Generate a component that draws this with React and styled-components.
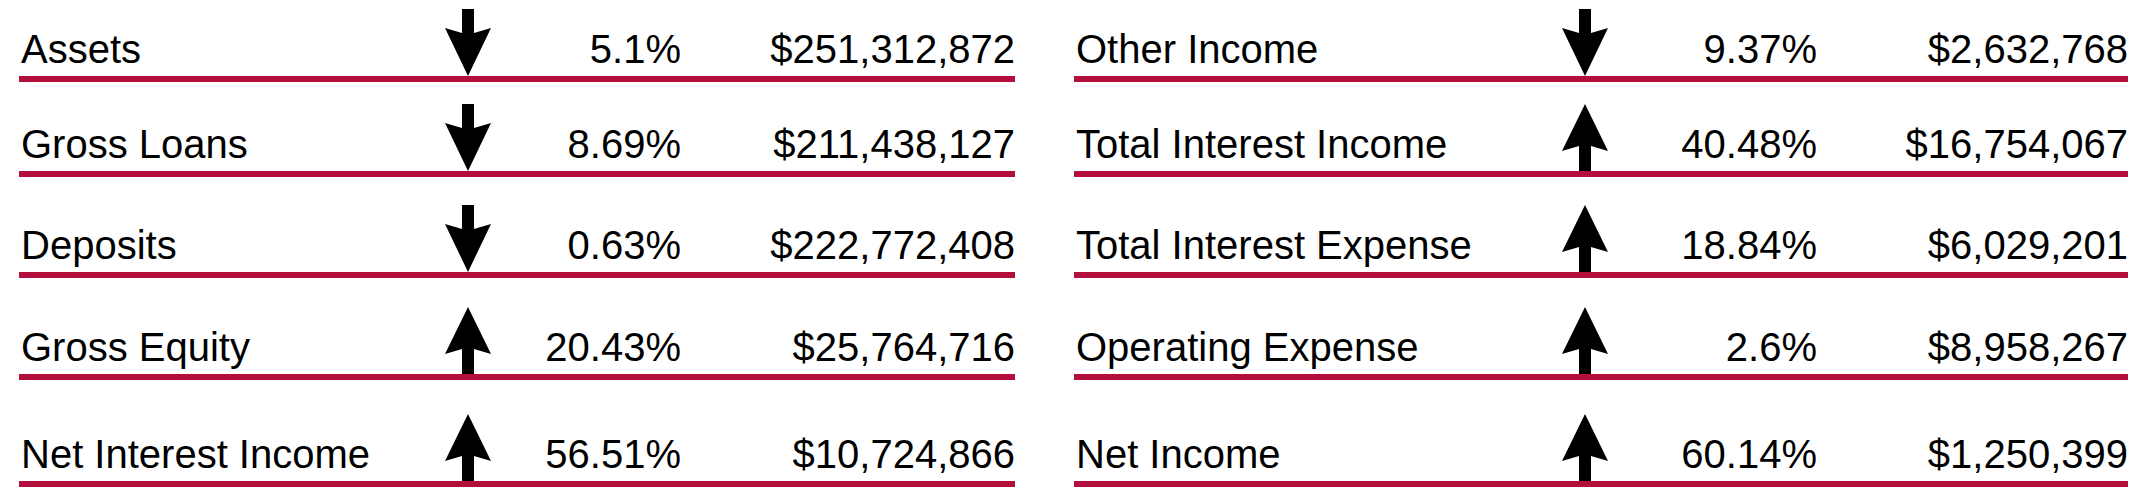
import React from "react";
import styled, { createGlobalStyle } from "styled-components";

const GlobalStyle = createGlobalStyle`
  body {
    margin: 0;
    background: #ffffff;
    font-family: "Liberation Sans", Arial, Helvetica, sans-serif;
  }
`;

const Page = styled.div`
  display: flex;
  gap: 59px;
  padding: 0 12px 0 19px;
  width: 2140px;
  height: 501px;
  box-sizing: border-box;
  overflow: hidden;
`;

const Column = styled.div`
  display: flex;
  flex-direction: column;
  width: ${({ $width }) => $width}px;
`;

const Row = styled.div`
  display: grid;
  grid-template-columns: ${({ $cols }) => $cols};
  align-items: end;
  height: ${({ $h }) => $h}px;
  border-bottom: 6px solid #b20f3c;
`;

const Label = styled.span`
  font-size: 40px;
  line-height: 1;
  color: #000;
  padding: 0 0 7px 2px;
  white-space: nowrap;
`;

const Value = styled(Label)`
  text-align: right;
  padding-left: 0;
`;

const ArrowCell = styled.div`
  display: flex;
  justify-content: center;
  align-items: flex-end;
  line-height: 0;
`;

const Arrow = ({ up }) => (
  <svg width="48" height="67" viewBox="0 0 48 67">
    <path
      fill="#000"
      d={
        up
          ? "M18 67 H30 V42 L47 47 L24 0 L1 47 L18 42 Z"
          : "M18 0 H30 V24 L47 19 L24 67 L1 19 L18 24 Z"
      }
    />
  </svg>
);

const heights = [76, 89, 95, 96, 101];

const left = [
  { label: "Assets", up: false, pct: "5.1%", amount: "$251,312,872" },
  { label: "Gross Loans", up: false, pct: "8.69%", amount: "$211,438,127" },
  { label: "Deposits", up: false, pct: "0.63%", amount: "$222,772,408" },
  { label: "Gross Equity", up: true, pct: "20.43%", amount: "$25,764,716" },
  { label: "Net Interest Income", up: true, pct: "56.51%", amount: "$10,724,866" },
];

const right = [
  { label: "Other Income", up: false, pct: "9.37%", amount: "$2,632,768" },
  { label: "Total Interest Income", up: true, pct: "40.48%", amount: "$16,754,067" },
  { label: "Total Interest Expense", up: true, pct: "18.84%", amount: "$6,029,201" },
  { label: "Operating Expense", up: true, pct: "2.6%", amount: "$8,958,267" },
  { label: "Net Income", up: true, pct: "60.14%", amount: "$1,250,399" },
];

const Table = ({ rows, cols, width }) => (
  <Column $width={width}>
    {rows.map((r, i) => (
      <Row key={r.label} $cols={cols} $h={heights[i]}>
        <Label>{r.label}</Label>
        <ArrowCell>
          <Arrow up={r.up} />
        </ArrowCell>
        <Value>{r.pct}</Value>
        <Value>{r.amount}</Value>
      </Row>
    ))}
  </Column>
);

export default function App() {
  return (
    <>
      <GlobalStyle />
      <Page>
        <Table rows={left} width={996} cols="425px 48px 189px 334px" />
        <Table rows={right} width={1054} cols="487px 48px 208px 311px" />
      </Page>
    </>
  );
}
